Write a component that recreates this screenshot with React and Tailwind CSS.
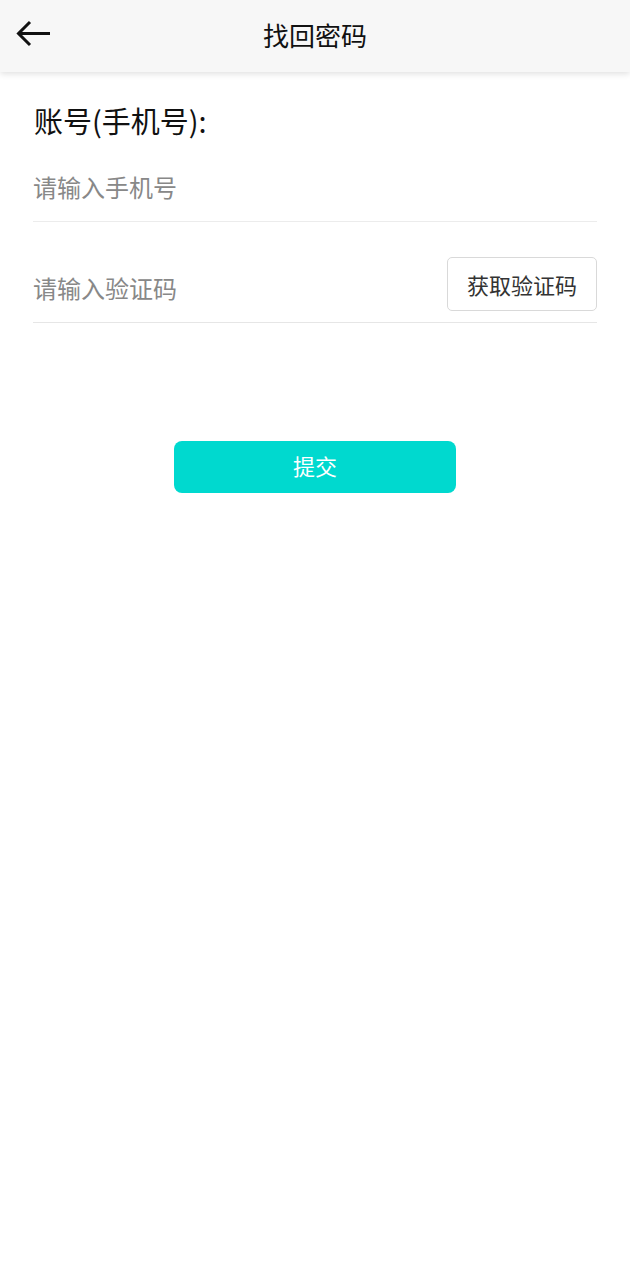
export default function App() {
  const font = { fontFamily: '"Noto Sans CJK SC", "Noto Sans", sans-serif' };
  return (
    <div className="w-[630px] min-h-[1280px] bg-white" style={font}>
      <div className="relative h-[72px] bg-[#f7f7f7] shadow-[0_2px_6px_rgba(0,0,0,0.12)] flex items-center justify-center">
        <svg className="absolute left-[16px] top-[20px]" width="36" height="28" viewBox="0 0 36 28" fill="none">
          <path d="M34 13.5H3 M14 2 L2.5 13.5 L14 25" stroke="#111" strokeWidth="3" strokeLinecap="butt" strokeLinejoin="miter" />
        </svg>
        <span className="text-[26px] text-[#111] leading-none -mt-[3px]">找回密码</span>
      </div>
      <div className="px-[33px]">
        <div className="pt-[28px] pl-[1px] text-[29px] leading-[40px] text-[#111]">账号(手机号):</div>
        <div className="h-[82px] border-b border-[#ececec] flex items-center pt-[20px] pb-[8px]">
          <span className="text-[24px] leading-[34px] text-[#888]">请输入手机号</span>
        </div>
        <div className="h-[101px] border-b border-[#e6e6e6] flex items-end justify-between pb-[11px]">
          <span className="text-[24px] leading-[34px] text-[#888] mb-[6px]">请输入验证码</span>
          <div className="w-[150px] h-[54px] border border-[#d9d9d9] rounded-[5px] flex items-center justify-center text-[22px] text-[#333]">
            获取验证码
          </div>
        </div>
      </div>
      <div className="flex justify-center pt-[118px]">
        <div className="w-[282px] h-[52px] rounded-[8px] bg-[#00d9cf] flex items-center justify-center text-white text-[22px] leading-none">
          <span className="-mt-[4px]">提交</span>
        </div>
      </div>
    </div>
  );
}
